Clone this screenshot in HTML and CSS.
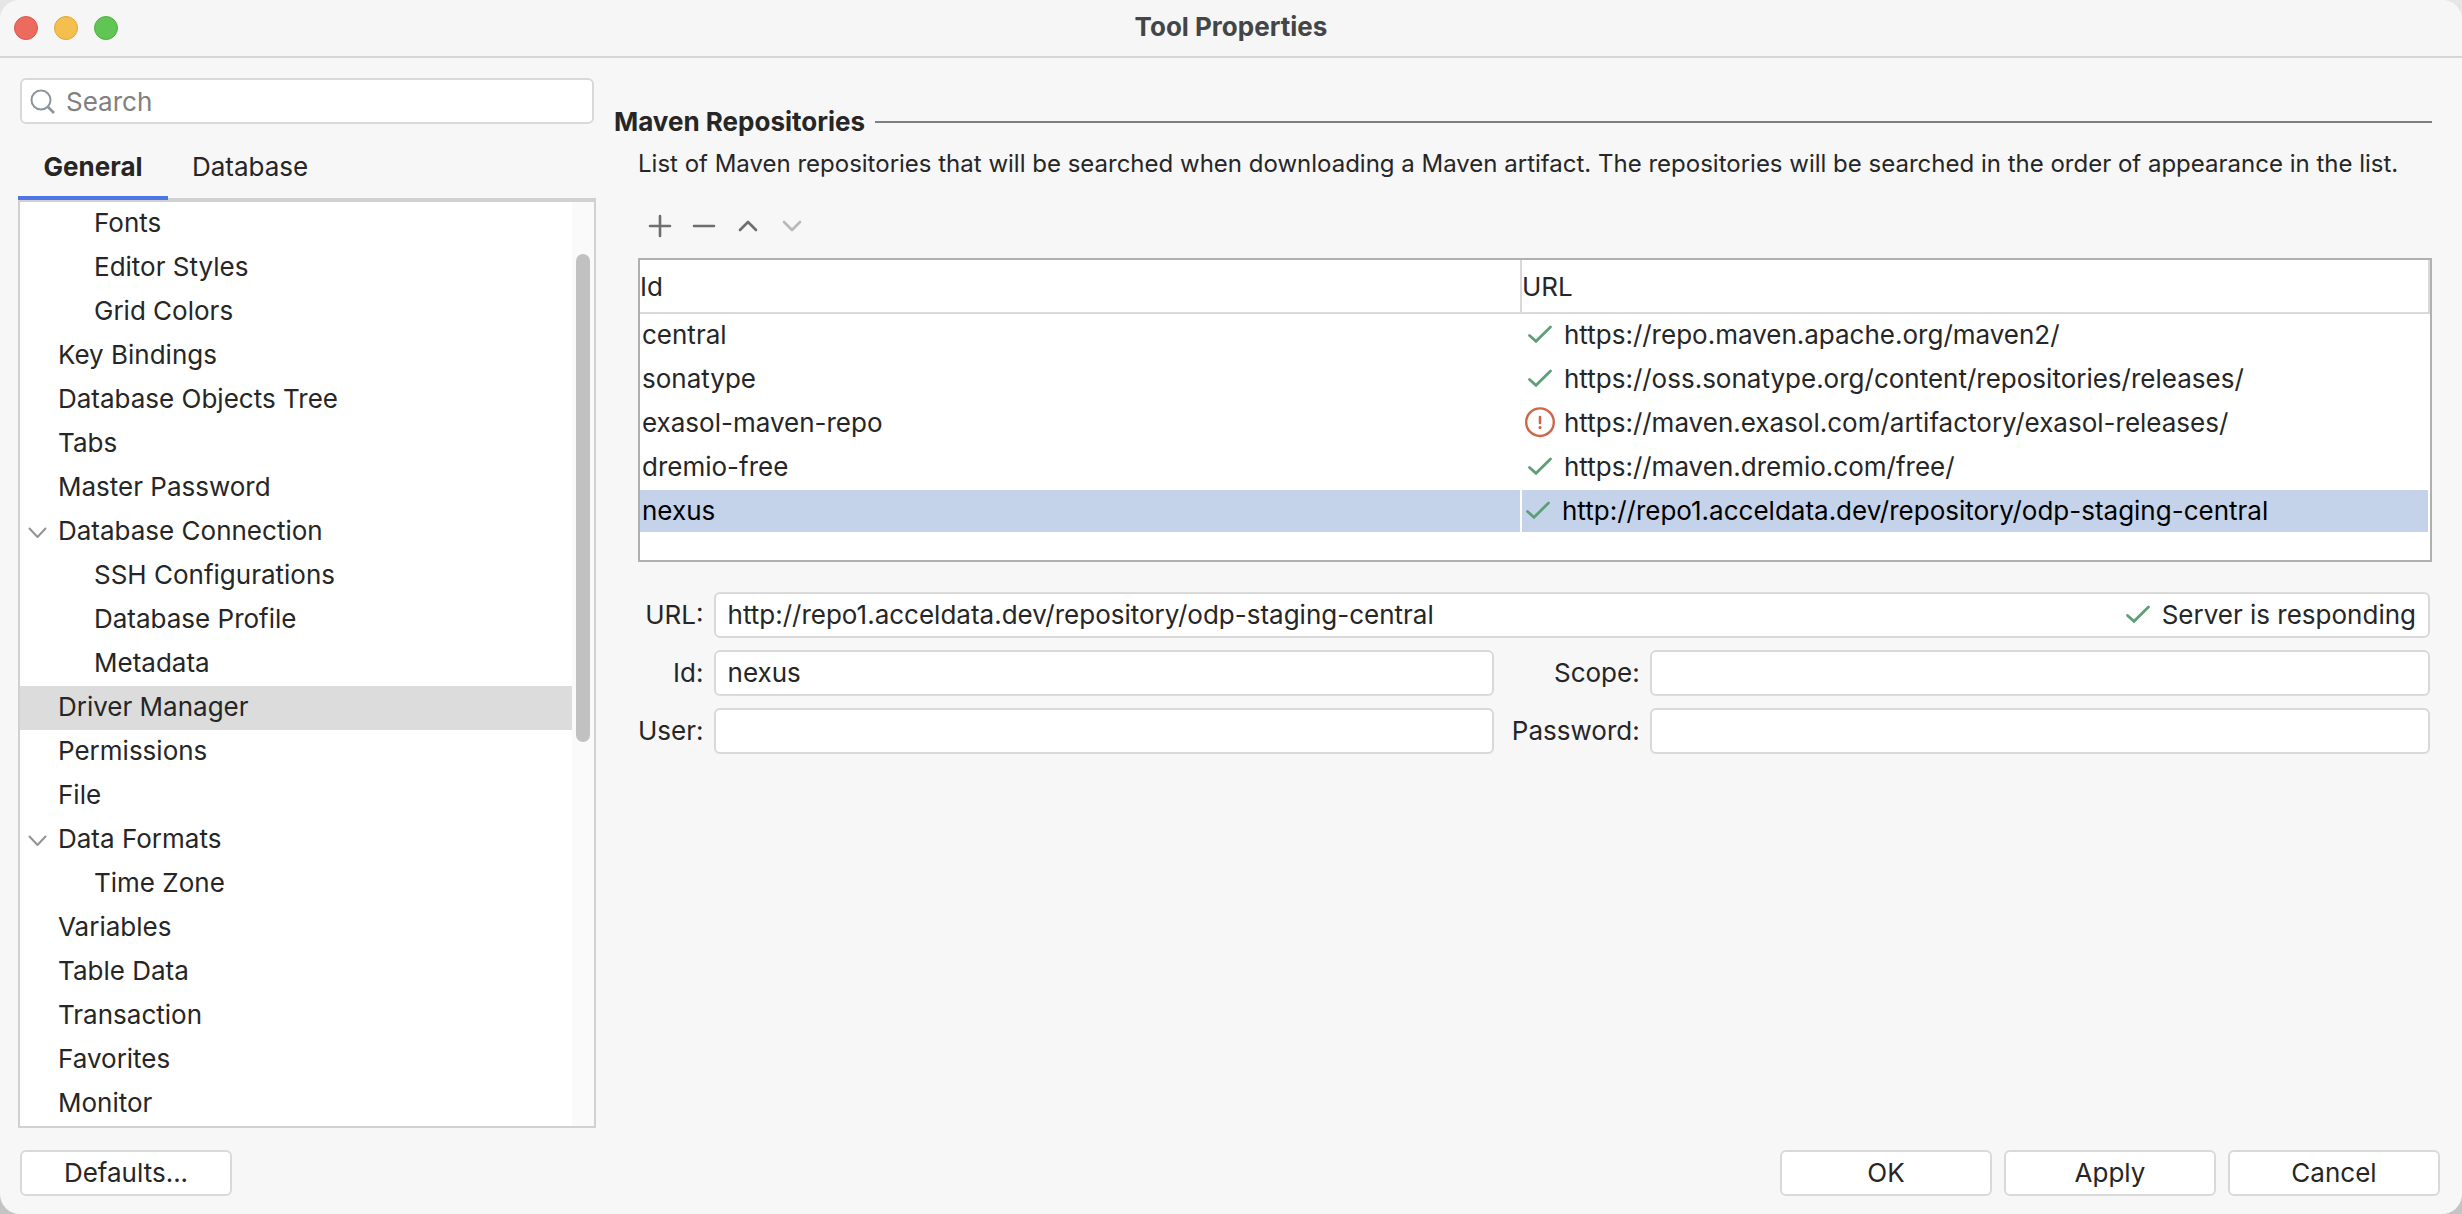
FILE: index.html
```html
<!DOCTYPE html>
<html lang="en">
<head>
  <meta charset="UTF-8">
  <meta name="viewport" content="width=device-width, initial-scale=1.0">
  <title>Tool Properties</title>
  <link rel="stylesheet" href="styles.css">
</head>
<body>

  <!-- Shared icons -->
  <svg class="sprite" aria-hidden="true">
    <symbol id="check" viewBox="0 0 32 32">
      <path d="M5.5 16.5 L12 22.3 L26.5 8" fill="none" stroke="#5f9f78" stroke-width="2.8" stroke-linecap="round" stroke-linejoin="miter"/>
    </symbol>
    <symbol id="error" viewBox="0 0 32 32">
      <circle cx="16" cy="15.2" r="13.8" fill="none" stroke="#cd6648" stroke-width="2.4"/>
      <path d="M16 10 V16" stroke="#cd6648" stroke-width="2.6" stroke-linecap="round"/>
      <circle cx="16" cy="20.6" r="1.6" fill="#cd6648"/>
    </symbol>
    <symbol id="arrow" viewBox="0 0 32 32">
      <path d="M7.5 13.5 L15.5 22 L23.5 13.5" fill="none" stroke="#939393" stroke-width="2" stroke-linecap="round" stroke-linejoin="round"/>
    </symbol>
  </svg>

  <div class="window">
    <header class="titlebar">
      <div class="lights">
        <button class="light red" aria-label="Close"></button>
        <button class="light yellow" aria-label="Minimize"></button>
        <button class="light green" aria-label="Zoom"></button>
      </div>
      <h1 class="title">Tool Properties</h1>
    </header>

    <div class="content">
      <aside class="sidebar">
        <div class="search">
          <svg class="search-icon" viewBox="0 0 26 26"><circle cx="11" cy="11" r="9.5" fill="none" stroke="#8b959c" stroke-width="2"/><path d="M18 18 L24 24" stroke="#8b959c" stroke-width="2.6"/></svg>
          <input class="search-input" type="text" placeholder="Search" aria-label="Search">
        </div>

        <div class="tabs">
          <button class="tab active">General</button>
          <button class="tab">Database</button>
        </div>

        <div class="tree">
          <ul class="tree-list">
            <li class="node child">Fonts</li>
            <li class="node child">Editor Styles</li>
            <li class="node child">Grid Colors</li>
            <li class="node">Key Bindings</li>
            <li class="node">Database Objects Tree</li>
            <li class="node">Tabs</li>
            <li class="node">Master Password</li>
            <li class="node parent"><svg class="icon"><use href="#arrow"/></svg>Database Connection</li>
            <li class="node child">SSH Configurations</li>
            <li class="node child">Database Profile</li>
            <li class="node child">Metadata</li>
            <li class="node selected">Driver Manager</li>
            <li class="node">Permissions</li>
            <li class="node">File</li>
            <li class="node parent"><svg class="icon"><use href="#arrow"/></svg>Data Formats</li>
            <li class="node child">Time Zone</li>
            <li class="node">Variables</li>
            <li class="node">Table Data</li>
            <li class="node">Transaction</li>
            <li class="node">Favorites</li>
            <li class="node">Monitor</li>
          </ul>
          <div class="scrollbar"><div class="thumb"></div></div>
        </div>
      </aside>

      <main class="main">
        <h2 class="section-title">Maven Repositories</h2>

        <div class="section">
          <p class="description">List of Maven repositories that will be searched when downloading a Maven artifact. The repositories will be searched in the order of appearance in the list.</p>

          <div class="toolbar">
            <button class="tool" aria-label="Add"><svg class="icon" viewBox="0 0 32 32"><path d="M16 6 V26 M6 16 H26"/></svg></button>
            <button class="tool" aria-label="Remove"><svg class="icon" viewBox="0 0 32 32"><path d="M6 16 H26"/></svg></button>
            <button class="tool" aria-label="Move up"><svg class="icon" viewBox="0 0 32 32"><path d="M8 20 L16 12 L24 20"/></svg></button>
            <button class="tool" aria-label="Move down" disabled><svg class="icon" viewBox="0 0 32 32"><path d="M8 12 L16 20 L24 12"/></svg></button>
          </div>

          <div class="table-box">
            <table class="repos">
              <thead>
                <tr><th class="col-id">Id</th><th>URL</th></tr>
              </thead>
              <tbody>
                <tr><td>central</td><td><div class="url"><svg class="icon"><use href="#check"/></svg>https://repo.maven.apache.org/maven2/</div></td></tr>
                <tr><td>sonatype</td><td><div class="url"><svg class="icon"><use href="#check"/></svg>https://oss.sonatype.org/content/repositories/releases/</div></td></tr>
                <tr><td>exasol-maven-repo</td><td><div class="url"><svg class="icon"><use href="#error"/></svg>https://maven.exasol.com/artifactory/exasol-releases/</div></td></tr>
                <tr><td>dremio-free</td><td><div class="url"><svg class="icon"><use href="#check"/></svg>https://maven.dremio.com/free/</div></td></tr>
                <tr class="selected"><td>nexus</td><td><div class="url"><svg class="icon"><use href="#check"/></svg>http://repo1.acceldata.dev/repository/odp-staging-central</div></td></tr>
              </tbody>
            </table>
          </div>

          <form class="form">
            <label for="url">URL:</label>
            <div class="field url-field">
              <input id="url" type="text" value="http://repo1.acceldata.dev/repository/odp-staging-central">
              <span class="status"><svg class="icon"><use href="#check"/></svg>Server is responding</span>
            </div>
            <label for="id">Id:</label>
            <div class="field"><input id="id" type="text" value="nexus"></div>
            <label for="scope">Scope:</label>
            <div class="field"><input id="scope" type="text"></div>
            <label for="user">User:</label>
            <div class="field"><input id="user" type="text"></div>
            <label for="password" class="wide-label">Password:</label>
            <div class="field"><input id="password" type="password"></div>
          </form>
        </div>
      </main>
    </div>

    <footer class="footer">
      <button class="btn defaults">Defaults...</button>
      <button class="btn">OK</button>
      <button class="btn">Apply</button>
      <button class="btn">Cancel</button>
    </footer>
  </div>

</body>
</html>
```

FILE: styles.css
```css
* {
  box-sizing: border-box;
}

body {
  margin: 0;
  background: linear-gradient(#e6e6e6, #c4c4c4);
  font-family: Inter, "Liberation Sans", sans-serif;
  font-size: 26px;
  line-height: 32px;
  color: #262626;
}

button, input {
  font: inherit;
  color: inherit;
}

.sprite {
  display: none;
}

.icon {
  width: 32px;
  height: 32px;
  flex: none;
}

.window {
  display: flex;
  flex-direction: column;
  min-height: 100vh;
  background: #f7f7f7;
  border-radius: 20px;
  overflow: hidden;
}

/* Title bar */
.titlebar {
  display: grid;
  grid-template-columns: 1fr auto 1fr;
  align-items: center;
  height: 58px;
  padding: 0 14px;
  background: #f6f6f6;
  border-bottom: 2px solid #d6d6d6;
}

.lights {
  display: flex;
  gap: 16px;
}

.light {
  width: 24px;
  height: 24px;
  padding: 0;
  border: 1px solid;
  border-radius: 50%;
}

.red {
  background: #ed6a5f;
  border-color: #d9574c;
}

.yellow {
  background: #f5bf4f;
  border-color: #dba63c;
}

.green {
  background: #61c554;
  border-color: #52ae45;
}

.title {
  margin: 0;
  padding-bottom: 2px;
  font-size: 26px;
  font-weight: 700;
  color: #454545;
}

.content {
  display: flex;
  flex: 1;
  gap: 18px;
  padding: 20px 30px 0 18px;
}

/* Sidebar */
.sidebar {
  display: flex;
  flex-direction: column;
  flex: none;
  width: 578px;
}

.search {
  display: flex;
  align-items: center;
  gap: 10px;
  height: 46px;
  margin: 0 2px;
  padding: 2px 8px 0;
  background: #fff;
  border: 2px solid #d9d9d9;
  border-radius: 6px;
}

.search-icon {
  width: 26px;
  height: 26px;
  flex: none;
}

.search-input {
  flex: 1;
  min-width: 0;
  padding: 0;
  border: none;
  outline: none;
  background: none;
}

.search-input::placeholder {
  color: #808080;
  opacity: 1;
}

.tabs {
  display: flex;
  height: 76px;
  border-bottom: 2px solid #d1d1d1;
}

.tab {
  min-width: 150px;
  height: 76px;
  padding: 14px 24px 0;
  border: none;
  border-bottom: 4px solid transparent;
  background: none;
}

.tab.active {
  position: relative;
  font-weight: 700;
  border-bottom-color: #4f76e6;
}

.tree {
  display: flex;
  background: #fff;
  border: 2px solid #d1d1d1;
}

.tree-list {
  flex: 1;
  margin: 0;
  padding: 0;
  list-style: none;
}

.node {
  display: flex;
  align-items: center;
  height: 44px;
  padding-bottom: 2px;
  padding-left: 38px;
}

.node.child {
  padding-left: 74px;
}

.node.parent {
  gap: 4px;
  padding-left: 2px;
}

.node.selected {
  background: #dcdcdc;
}

.scrollbar {
  width: 22px;
  padding: 52px 4px 0;
  background: #fafafa;
}

.thumb {
  height: 488px;
  border-radius: 7px;
  background: #c1c1c1;
}

/* Right side */
.main {
  flex: 1;
  min-width: 0;
  padding-top: 28px;
}

.section-title {
  display: flex;
  align-items: center;
  gap: 10px;
  margin: 0;
  font-size: 26px;
  font-weight: 700;
}

.section-title::after {
  content: "";
  flex: 1;
  height: 2px;
  background: #808080;
}

.section {
  padding-left: 24px;
}

.description {
  margin: 10px 0 0;
  font-size: 24px;
  line-height: 32px;
}

.toolbar {
  display: flex;
  gap: 12px;
  margin: 30px 0 16px 6px;
}

.tool {
  width: 32px;
  height: 32px;
  padding: 0;
  border: none;
  background: none;
}

.tool .icon {
  display: block;
  fill: none;
  stroke: #6e6e6e;
  stroke-width: 2.6;
  stroke-linecap: round;
  stroke-linejoin: round;
}

.tool:disabled .icon {
  stroke: #b9b9b9;
}

.table-box {
  height: 304px;
  background: #fff;
  border: 2px solid #b0b0b0;
}

.repos {
  width: 100%;
  border-collapse: separate;
  border-spacing: 0;
  table-layout: fixed;
}

.repos th {
  height: 54px;
  padding: 2px 0 0;
  border-right: 2px solid #d9d9d9;
  border-bottom: 2px solid #d9d9d9;
  font-weight: 400;
  text-align: left;
}

.col-id {
  width: 882px;
}

.repos td {
  height: 44px;
  padding: 0 2px;
  border-right: 2px solid #fff;
  border-bottom: 2px solid #fff;
}

.repos .selected {
  background: #c4d3ea;
  color: #000;
}

.repos .selected .url {
  margin-left: -2px;
}

.url {
  display: flex;
  align-items: center;
  gap: 8px;
}

/* Repository form */
.form {
  display: grid;
  grid-template-columns: auto 1fr auto 1fr;
  align-items: center;
  gap: 12px 10px;
  margin: 30px 2px 0 0;
}

.form label {
  text-align: right;
}

.form .wide-label {
  padding-left: 8px;
}

.field {
  display: flex;
  align-items: center;
  height: 46px;
  padding: 0 12px;
  background: #fff;
  border: 2px solid #d9d9d9;
  border-radius: 6px;
}

.field input {
  flex: 1;
  min-width: 0;
  padding: 0;
  border: none;
  outline: none;
  background: none;
}

.url-field {
  grid-column: 2 / -1;
}

.status {
  display: flex;
  align-items: center;
  gap: 8px;
}

/* Bottom buttons */
.footer {
  display: flex;
  gap: 12px;
  padding: 22px 22px 18px 20px;
}

.btn {
  width: 212px;
  height: 46px;
  padding: 0;
  background: #fff;
  border: 2px solid #d9d9d9;
  border-radius: 6px;
}

.defaults {
  margin-right: auto;
}
```
